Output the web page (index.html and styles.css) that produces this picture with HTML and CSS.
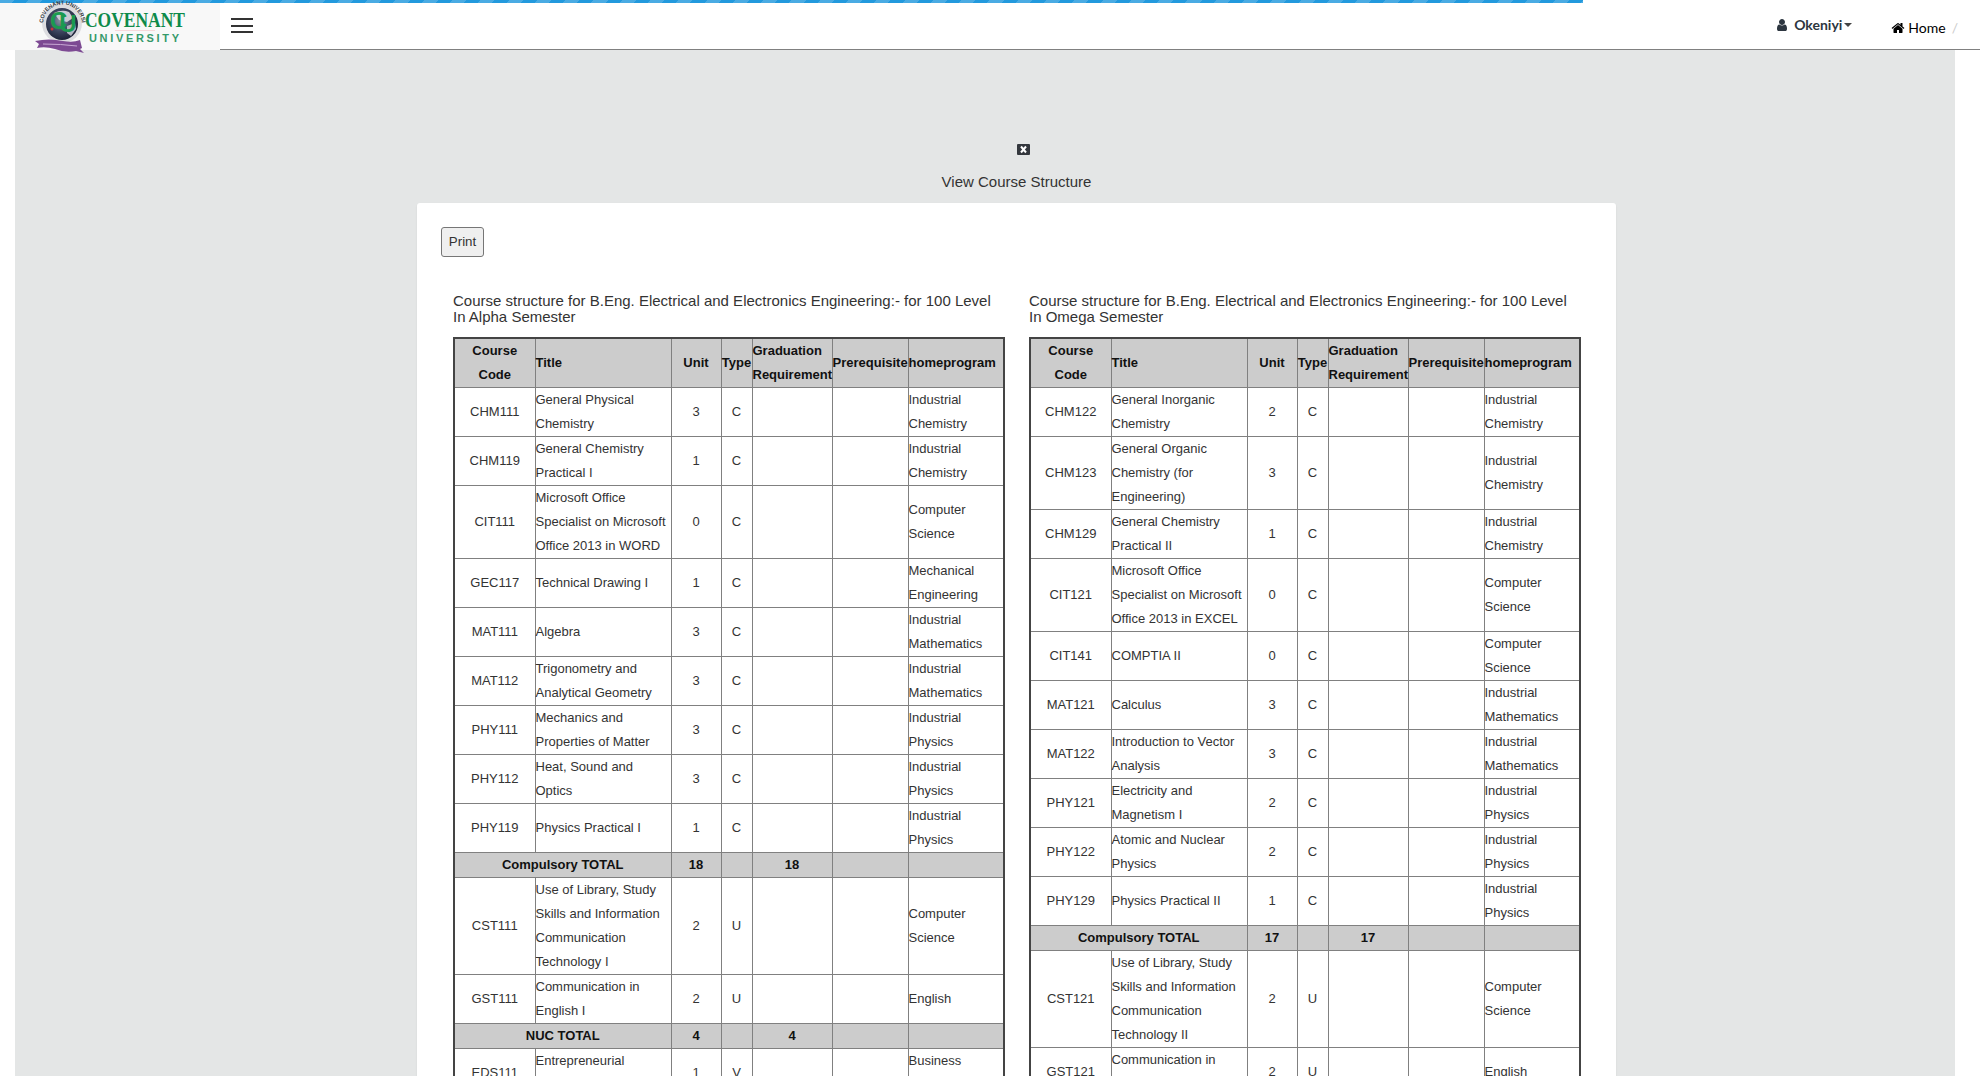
FILE: index.html
```html
<!DOCTYPE html>
<html lang="en">
<head>
    <meta charset="UTF-8">
    <title>View Course Structure</title>
    <link rel="stylesheet" href="styles.css">
</head>
<body>
    <!-- Page load bar -->
    <div class="load-bar"></div>

    <!-- Top navigation -->
    <header class="topbar">
        <a class="brand">
            <svg class="brand-logo" width="220" height="56" viewBox="0 0 220 56">
                <defs>
                    <radialGradient id="globe" cx="45%" cy="40%" r="60%">
                        <stop offset="0" stop-color="#8b93a3"/>
                        <stop offset="0.55" stop-color="#3d4660"/>
                        <stop offset="1" stop-color="#1c2238"/>
                    </radialGradient>
                    <path id="ring" d="M 43 24 A 19.500 19.500 0 1 1 82 24"/>
                </defs>
                <circle cx="62" cy="23" r="20" fill="#dcdce0"/>
                <circle cx="62" cy="24" r="16" fill="url(#globe)"/>
                <path d="M54 13 q8 -4 15 -1 l4 6 -6 4 -8 -2 z" fill="#c9ccd4"/>
                <path d="M67 26 l8 -3 1 6 -5 7 -4 -3 z" fill="#aeb3bf"/>
                <text class="logo-ring"><textPath href="#ring" startOffset="1">COVENANT UNIVERSITY</textPath></text>
                <text class="logo-cu" x="50" y="29">C<tspan dx="-8" dy="3">U</tspan></text>
                <circle cx="52" cy="29" r="1.500" fill="#c8323c"/>
                <path d="M35 41 q14 -3 28 0 q10 2 17 -1 l2 8 -2 1 4 4 -8 -2 q-11 2 -21 -2 q-10 -3 -18 -1 l2 -4 z" fill="#7d4a93"/>
                <path d="M43 44 q18 0 34 2" stroke="#c8a9d4" stroke-width="1" fill="none"/>
                <text class="logo-name" x="85" y="27" textLength="100" lengthAdjust="spacingAndGlyphs">COVENANT</text>
                <path d="M115 30.500 h40" stroke="#f6d8da" stroke-width="1"/>
                <text class="logo-sub" x="89" y="42" textLength="90">UNIVERSITY</text>
            </svg>
        </a>
        <button class="menu-toggle"><span></span><span></span><span></span></button>
        <nav class="topnav">
            <a class="user-menu">
                <svg class="icon" viewBox="0 0 1792 1792"><path d="M1536 1399q0 109-62.500 187t-150.500 78H469q-88 0-150.500-78T256 1399q0-85 8.500-160.500t31.500-152 58.500-131 94-89T583 832q131 128 313 128t313-128q76 0 134.500 34.500t94 89 58.500 131 31.500 152 8.500 160.500zm-256-887q0 159-112.500 271.500T896 896 624.500 783.500 512 512t112.500-271.500T896 128t271.500 112.500T1280 512z"/></svg>
                <span class="user-name">Okeniyi</span>
                <span class="caret"></span>
            </a>
            <div class="crumbs">
                <svg class="icon" viewBox="0 0 1792 1792"><path d="M1472 992v480q0 26-19 45t-45 19h-384v-384H768v384H384q-26 0-45-19t-19-45V992q0-1 .5-3t.5-3l575-474 575 474q1 2 1 6zm223-69l-62 74q-8 9-21 11h-3q-13 0-21-7L896 424l-692 577q-12 8-24 7-13-2-21-11l-62-74q-8-10-7-23.500t11-21.500l719-599q32-26 76-26t76 26l244 204V288q0-14 9-23t23-9h192q14 0 23 9t9 23v408l219 182q10 8 11 21.500t-7 23.500z"/></svg>
                <span>Home</span>
                <span class="crumb-sep">/</span>
            </div>
        </nav>
    </header>

    <main class="page">
        <div class="panel">
            <div class="panel-close">
                <svg width="13" height="11" viewBox="0 0 13 11"><rect width="13" height="11" rx="1" fill="#33373d"/><path d="M4 2.500l5 6M9 2.500l-5 6" stroke="#fff" stroke-width="2"/></svg>
            </div>
            <h4 class="panel-title">View Course Structure</h4>

            <div class="card">
                <button class="print-btn">Print</button>

                <div class="semesters">
                    <!-- Alpha semester -->
                    <section>
                        <h5 class="semester-title">Course structure for B.Eng. Electrical and Electronics Engineering:- for 100 Level In Alpha Semester</h5>
                        <table class="course-table">
                            <colgroup>
                                <col class="col-code"><col class="col-title"><col class="col-unit"><col class="col-type"><col class="col-grad"><col class="col-pre"><col>
                            </colgroup>
                            <tr><th class="mid">Course Code</th><th>Title</th><th class="mid">Unit</th><th class="mid">Type</th><th>Graduation Requirement</th><th>Prerequisite</th><th>homeprogram</th></tr>
                            <tr><td class="mid">CHM111</td><td>General Physical Chemistry</td><td class="mid">3</td><td class="mid">C</td><td></td><td></td><td>Industrial Chemistry</td></tr>
                            <tr><td class="mid">CHM119</td><td>General Chemistry Practical I</td><td class="mid">1</td><td class="mid">C</td><td></td><td></td><td>Industrial Chemistry</td></tr>
                            <tr><td class="mid">CIT111</td><td>Microsoft Office Specialist on Microsoft Office 2013 in WORD</td><td class="mid">0</td><td class="mid">C</td><td></td><td></td><td>Computer Science</td></tr>
                            <tr><td class="mid">GEC117</td><td>Technical Drawing I</td><td class="mid">1</td><td class="mid">C</td><td></td><td></td><td>Mechanical Engineering</td></tr>
                            <tr><td class="mid">MAT111</td><td>Algebra</td><td class="mid">3</td><td class="mid">C</td><td></td><td></td><td>Industrial Mathematics</td></tr>
                            <tr><td class="mid">MAT112</td><td>Trigonometry and Analytical Geometry</td><td class="mid">3</td><td class="mid">C</td><td></td><td></td><td>Industrial Mathematics</td></tr>
                            <tr><td class="mid">PHY111</td><td>Mechanics and Properties of Matter</td><td class="mid">3</td><td class="mid">C</td><td></td><td></td><td>Industrial Physics</td></tr>
                            <tr><td class="mid">PHY112</td><td>Heat, Sound and Optics</td><td class="mid">3</td><td class="mid">C</td><td></td><td></td><td>Industrial Physics</td></tr>
                            <tr><td class="mid">PHY119</td><td>Physics Practical I</td><td class="mid">1</td><td class="mid">C</td><td></td><td></td><td>Industrial Physics</td></tr>
                            <tr class="total"><td class="mid" colspan="2">Compulsory TOTAL</td><td class="mid">18</td><td></td><td class="mid">18</td><td></td><td></td></tr>
                            <tr><td class="mid">CST111</td><td>Use of Library, Study Skills and Information Communication Technology I</td><td class="mid">2</td><td class="mid">U</td><td></td><td></td><td>Computer Science</td></tr>
                            <tr><td class="mid">GST111</td><td>Communication in English I</td><td class="mid">2</td><td class="mid">U</td><td></td><td></td><td>English</td></tr>
                            <tr class="total"><td class="mid" colspan="2">NUC TOTAL</td><td class="mid">4</td><td></td><td class="mid">4</td><td></td><td></td></tr>
                            <tr><td class="mid">EDS111</td><td>Entrepreneurial Development Studies I</td><td class="mid">1</td><td class="mid">V</td><td></td><td></td><td>Business Management</td></tr>
                        </table>
                    </section>

                    <!-- Omega semester -->
                    <section>
                        <h5 class="semester-title">Course structure for B.Eng. Electrical and Electronics Engineering:- for 100 Level In Omega Semester</h5>
                        <table class="course-table">
                            <colgroup>
                                <col class="col-code"><col class="col-title"><col class="col-unit"><col class="col-type"><col class="col-grad"><col class="col-pre"><col>
                            </colgroup>
                            <tr><th class="mid">Course Code</th><th>Title</th><th class="mid">Unit</th><th class="mid">Type</th><th>Graduation Requirement</th><th>Prerequisite</th><th>homeprogram</th></tr>
                            <tr><td class="mid">CHM122</td><td>General Inorganic Chemistry</td><td class="mid">2</td><td class="mid">C</td><td></td><td></td><td>Industrial Chemistry</td></tr>
                            <tr><td class="mid">CHM123</td><td>General Organic Chemistry (for Engineering)</td><td class="mid">3</td><td class="mid">C</td><td></td><td></td><td>Industrial Chemistry</td></tr>
                            <tr><td class="mid">CHM129</td><td>General Chemistry Practical II</td><td class="mid">1</td><td class="mid">C</td><td></td><td></td><td>Industrial Chemistry</td></tr>
                            <tr><td class="mid">CIT121</td><td>Microsoft Office Specialist on Microsoft Office 2013 in EXCEL</td><td class="mid">0</td><td class="mid">C</td><td></td><td></td><td>Computer Science</td></tr>
                            <tr><td class="mid">CIT141</td><td>COMPTIA II</td><td class="mid">0</td><td class="mid">C</td><td></td><td></td><td>Computer Science</td></tr>
                            <tr><td class="mid">MAT121</td><td>Calculus</td><td class="mid">3</td><td class="mid">C</td><td></td><td></td><td>Industrial Mathematics</td></tr>
                            <tr><td class="mid">MAT122</td><td>Introduction to Vector Analysis</td><td class="mid">3</td><td class="mid">C</td><td></td><td></td><td>Industrial Mathematics</td></tr>
                            <tr><td class="mid">PHY121</td><td>Electricity and Magnetism I</td><td class="mid">2</td><td class="mid">C</td><td></td><td></td><td>Industrial Physics</td></tr>
                            <tr><td class="mid">PHY122</td><td>Atomic and Nuclear Physics</td><td class="mid">2</td><td class="mid">C</td><td></td><td></td><td>Industrial Physics</td></tr>
                            <tr><td class="mid">PHY129</td><td>Physics Practical II</td><td class="mid">1</td><td class="mid">C</td><td></td><td></td><td>Industrial Physics</td></tr>
                            <tr class="total"><td class="mid" colspan="2">Compulsory TOTAL</td><td class="mid">17</td><td></td><td class="mid">17</td><td></td><td></td></tr>
                            <tr><td class="mid">CST121</td><td>Use of Library, Study Skills and Information Communication Technology II</td><td class="mid">2</td><td class="mid">U</td><td></td><td></td><td>Computer Science</td></tr>
                            <tr><td class="mid">GST121</td><td>Communication in English II</td><td class="mid">2</td><td class="mid">U</td><td></td><td></td><td>English</td></tr>
                        </table>
                    </section>
                </div>
            </div>
        </div>
    </main>
</body>
</html>
```

FILE: styles.css
```css
html {
    background-color: #fff;
}

body {
    margin: 0;
    height: 1076px;
    overflow: hidden;
    display: flex;
    flex-direction: column;
    font-family: "Liberation Sans", Arial, sans-serif;
    color: #333;
}

/* Load bar */
.load-bar {
    width: 1583px;
    height: 3px;
    flex: none;
    background-color: #2299dd;
    background-image: repeating-linear-gradient(135deg, rgba(255, 255, 255, 0.18) 0 10px, transparent 10px 20px);
}

/* Top navigation */
.topbar {
    display: flex;
    flex: none;
    height: 46px;
    border-bottom: 1px solid #808080;
    position: relative;
    z-index: 2;
}

.brand {
    display: block;
    width: 220px;
    height: 47px;
    background-color: #f8f8f8;
}

.brand-logo {
    display: block;
    margin-top: -3px;
    overflow: visible;
}

.logo-ring {
    font-family: "Liberation Sans", sans-serif;
    font-size: 5.500px;
    font-weight: 700;
    fill: #33373d;
}

.logo-cu {
    font-family: "Liberation Sans", sans-serif;
    font-size: 24px;
    font-weight: 700;
    fill: #1a9a50;
}

.logo-name {
    font-family: "Liberation Serif", serif;
    font-size: 20px;
    font-weight: 700;
    fill: #0e8a4a;
}

.logo-sub {
    font-family: "Liberation Sans", sans-serif;
    font-size: 11px;
    font-weight: 700;
    fill: #35996a;
}

.menu-toggle {
    display: flex;
    flex-direction: column;
    gap: 4.500px;
    width: 22px;
    height: 15px;
    margin: 15px 0 0 11px;
    padding: 0;
    border: none;
    background: none;
}

.menu-toggle span {
    display: block;
    height: 2px;
    width: 100%;
    background-color: #333;
}

.topnav {
    display: flex;
    align-items: flex-start;
    margin-left: auto;
    padding-right: 22px;
    font-family: Lato, sans-serif;
    font-size: 14px;
}

.icon {
    width: 14px;
    height: 14px;
    fill: currentColor;
}

.user-menu {
    display: flex;
    align-items: center;
    gap: 5px;
    margin-top: 13px;
    color: #2d3640;
}

.user-name {
    font-weight: 700;
}

.caret {
    width: 0;
    height: 0;
    margin-left: -3px;
    border-top: 4px solid #444;
    border-left: 4px solid transparent;
    border-right: 4px solid transparent;
}

.crumbs {
    display: flex;
    align-items: center;
    gap: 3px;
    margin: 16px 0 0 39px;
    color: #000;
}

.crumb-sep {
    margin-left: 3px;
    color: #ccc;
}

/* Page body */
.page {
    flex: 1;
    margin: 0 25px 0 15px;
    background-color: #e4e6e6;
    min-height: 0;
    overflow: hidden;
}

.panel {
    width: 1199px;
    margin-left: 402px;
    padding-top: 94px;
}

.panel-close {
    height: 11px;
    line-height: 0;
    padding-left: 14px;
    text-align: center;
}

.panel-title {
    margin: 18px 0 0;
    font-size: 15px;
    font-weight: 400;
    line-height: 18px;
    text-align: center;
}

.card {
    margin-top: 12px;
    padding: 24px;
    background-color: #fff;
    border-radius: 3px;
    box-shadow: 0 1px 2px rgba(0, 0, 0, 0.08);
}

.print-btn {
    display: block;
    width: 43px;
    height: 30px;
    padding: 0 0 2px;
    border: 1px solid #767676;
    border-radius: 3px;
    background-color: #efefef;
    color: #333;
    font-family: "Liberation Sans", Arial, sans-serif;
    font-size: 13.330px;
}

.semesters {
    display: grid;
    grid-template-columns: 552px 552px;
    gap: 24px;
    margin: 36px 0 0 12px;
}

.semester-title {
    margin: 0 0 12px;
    font-size: 15px;
    font-weight: 400;
    line-height: 16px;
}

/* Course tables */
.course-table {
    width: 552px;
    table-layout: fixed;
    border-collapse: collapse;
    border: 2px solid #444;
    font-size: 13px;
    line-height: 24px;
}

.course-table th,
.course-table td {
    padding: 0;
    border: 1px solid #808080;
    text-align: left;
    vertical-align: middle;
}

.course-table th,
.total td {
    background-color: #ccc;
    color: #111;
    font-weight: 700;
}

.course-table .mid {
    text-align: center;
}

.col-code { width: 81px; }
.col-title { width: 136px; }
.col-unit { width: 50px; }
.col-type { width: 31px; }
.col-grad { width: 80px; }
.col-pre { width: 76px; }
```
